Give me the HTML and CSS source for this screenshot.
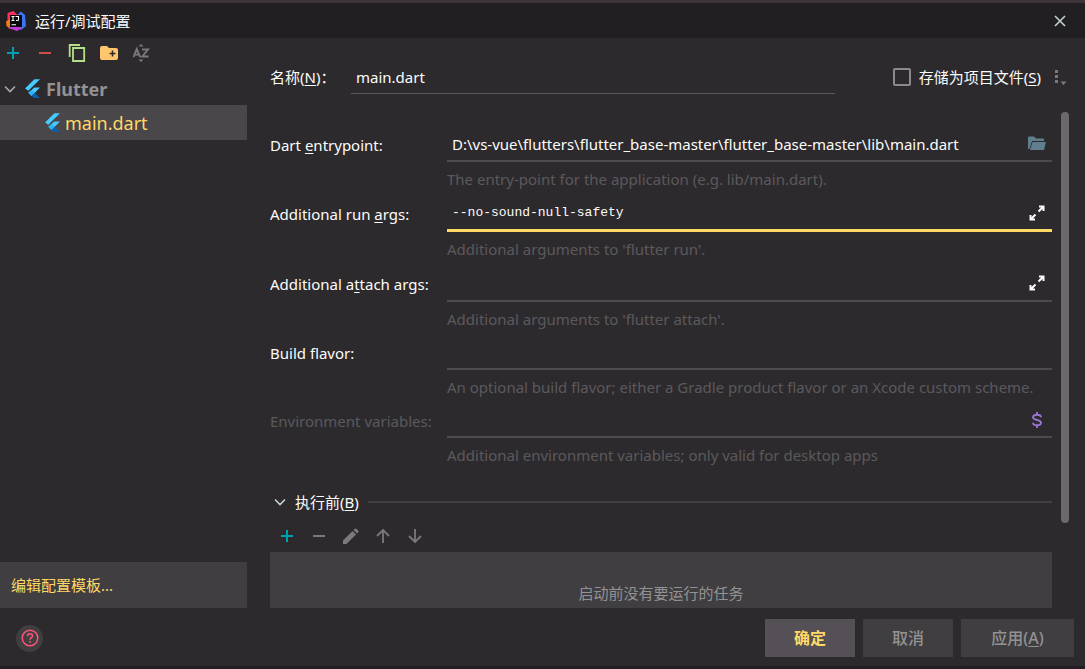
FILE: index.html
```html
<!DOCTYPE html>
<html lang="zh-CN">
<head>
<meta charset="utf-8">
<meta name="viewport" content="width=device-width, initial-scale=1">
<title>运行/调试配置</title>
<link rel="stylesheet" href="styles.css">
</head>
<body>
<svg class="defs" aria-hidden="true">
  <symbol id="flutter" viewBox="0 0 16 20">
    <path d="M10 0h6L3.500 12.500 0 10z" fill="#45cbff"/>
    <path d="M10 9h6l-5.500 5.500L7 18l-3.500-3.500z" fill="#45cbff"/>
    <path d="M7 11.500l3.500 3-3.500 3.500-3.500-3.500z" fill="#2bb4f5"/>
    <path d="M7 18l3.500-3.500L16 20h-6.500z" fill="#0b5fa8"/>
  </symbol>
  <symbol id="plus" viewBox="0 0 12 12"><path d="M6 0v12M0 6h12" stroke="currentColor" stroke-width="2"/></symbol>
  <symbol id="minus" viewBox="0 0 12 12"><path d="M0 6h12" stroke="currentColor" stroke-width="2"/></symbol>
  <symbol id="chevron" viewBox="0 0 12 12"><path d="M1 3.500L6 8.500l5-5" fill="none" stroke="currentColor" stroke-width="1.600"/></symbol>
  <symbol id="expand" viewBox="0 0 16 16"><path d="M10 1.500h4.500V6M14 2L9.500 6.500M1.500 10v4.500H6M2 14L6.500 9.500" fill="none" stroke="currentColor" stroke-width="2"/></symbol>
</svg>
<div class="dialog">
  <header class="titlebar">
    <svg class="logo" viewBox="0 0 20 20" aria-hidden="true">
      <path d="M1.500 2l6-2 5 5-6 8-5-1z" fill="#fe315d"/>
      <path d="M0 10.500L4 8l3 8-3 2-3.500-3z" fill="#f97a12"/>
      <path d="M10 5l5-4.500L19 4l1 11-5 4-5-3z" fill="#3b73f5"/>
      <path d="M2.500 17L5 13l9 1 2 3-5 3z" fill="#c03bd6"/>
      <rect x="4" y="4" width="12" height="12" fill="#08080a"/>
      <path d="M5.500 5.500h3M7 5.500v4M5.500 9.500h3M9.500 5.500h3v3q0 1-1 1h-1.500M5.500 13.700h4.500" fill="none" stroke="#fff" stroke-width="1.100"/>
    </svg>
    <h1 class="title">运行/调试配置</h1>
    <button class="icon-button close" aria-label="关闭"><svg class="i12" viewBox="0 0 12 12"><path d="M1 1l10 10M11 1L1 11" stroke="currentColor" stroke-width="1.600"/></svg></button>
  </header>
  <div class="content">
    <aside class="sidebar">
      <div class="toolbar">
        <button class="icon-button teal" aria-label="添加"><svg class="i12"><use href="#plus"/></svg></button>
        <button class="icon-button red" aria-label="移除"><svg class="i12"><use href="#minus"/></svg></button>
        <button class="icon-button green" aria-label="复制"><svg class="i18" viewBox="0 0 18 18"><path d="M1.700 13V1H12M5 4h11.200v13H5z" fill="none" stroke="currentColor" stroke-width="1.800"/></svg></button>
        <button class="icon-button folder" aria-label="新建文件夹"><svg class="i18" viewBox="0 0 18 18"><path d="M2 2h5l2 2h7q2 0 2 2v8q0 2-2 2H2q-2 0-2-2V4q0-2 2-2z" fill="currentColor"/><path d="M12.500 6.500v6M9.500 9.500h6" stroke="#2d2a2e" stroke-width="1.600"/></svg></button>
        <button class="icon-button gray" aria-label="排序"><svg class="i18" viewBox="0 0 18 18"><path d="M6.500 2.500L9 0l2.500 2.500zM6.500 15.500L9 18l2.500-2.500z" fill="currentColor"/><path d="M1.500 13.200L4.800 5 8.200 13.200M2.800 10.600h4M10 5.500h6L10.300 12.500h6.200" fill="none" stroke="currentColor" stroke-width="1.900"/></svg></button>
      </div>
      <ul class="tree">
        <li><button class="tree-row group"><svg class="i12"><use href="#chevron"/></svg><svg class="flutter"><use href="#flutter"/></svg><span>Flutter</span></button></li>
        <li><button class="tree-row selected"><svg class="flutter"><use href="#flutter"/></svg><span>main.dart</span></button></li>
      </ul>
      <a class="templates" href="#">编辑配置模板...</a>
    </aside>
    <main class="panel">
      <div class="name-row">
        <label class="name-label" for="name">名称(<u>N</u>)：</label>
        <input class="field name-field" id="name" value="main.dart">
        <label class="store"><input class="check" type="checkbox"><span>存储为项目文件(<u>S</u>)</span></label>
        <button class="icon-button gray" aria-label="更多"><svg class="more" viewBox="0 0 12 16"><path d="M0 1h3v3H0zM0 6h3v3H0zM0 11h3v3H0zM5.500 12.500h6L8.500 16z" fill="currentColor"/></svg></button>
      </div>
      <div class="scroll-area">
        <div class="form">
          <label for="entry">Dart <u>e</u>ntrypoint:</label>
          <div class="field-box"><input class="field" id="entry" value="D:\vs-vue\flutters\flutter_base-master\flutter_base-master\lib\main.dart"><button class="icon-button blue" aria-label="浏览"><svg class="i18" viewBox="0 0 18 18"><path d="M0 14V2.500q0-1 1-1h5l2 2h7q1 0 1 1v1.500H4l-2.500 8z" fill="currentColor"/><path d="M4.500 7H18l-2 8H2z" fill="currentColor"/></svg></button></div>
          <p class="hint">The entry-point for the application (e.g. lib/main.dart).</p>

          <label for="run">Additional run <u>a</u>rgs:</label>
          <div class="field-box tall active"><input class="field mono" id="run" value="--no-sound-null-safety"><button class="icon-button" aria-label="展开"><svg class="i16"><use href="#expand"/></svg></button></div>
          <p class="hint">Additional arguments to 'flutter run'.</p>

          <label for="attach">Additional a<u>t</u>tach args:</label>
          <div class="field-box tall"><input class="field" id="attach"><button class="icon-button" aria-label="展开"><svg class="i16"><use href="#expand"/></svg></button></div>
          <p class="hint">Additional arguments to 'flutter attach'.</p>

          <label for="flavor">Build flavor:</label>
          <div class="field-box"><input class="field" id="flavor"></div>
          <p class="hint">An optional build flavor; either a Gradle product flavor or an Xcode custom scheme.</p>

          <label class="muted" for="env">Environment variables:</label>
          <div class="field-box"><input class="field" id="env"><button class="icon-button purple" aria-label="环境变量"><svg class="i16" viewBox="0 0 16 16"><path d="M12 5.200C12 3.500 10.500 2.700 8 2.700S4 3.600 4 5.200C4 8.500 12 7.300 12 10.800c0 1.600-1.500 2.500-4 2.500s-4-.900-4-2.500M8 0v2.700M8 13.300V16" fill="none" stroke="currentColor" stroke-width="1.900"/></svg></button></div>
          <p class="hint">Additional environment variables; only valid for desktop apps</p>
        </div>
        <section class="before">
          <h2 class="before-title"><svg class="i12"><use href="#chevron"/></svg><span>执行前(<u>B</u>)</span></h2>
          <div class="toolbar small">
            <button class="icon-button teal" aria-label="添加"><svg class="i12"><use href="#plus"/></svg></button>
            <button class="icon-button gray" aria-label="移除"><svg class="i12"><use href="#minus"/></svg></button>
            <button class="icon-button gray" aria-label="编辑"><svg class="i16" viewBox="0 0 16 16"><path d="M0 12.500L9.500 3l3.500 3.500L3.500 16H0zM10.500 2l1.300-1.300q.7-.7 1.400 0l2.100 2.100q.7.7 0 1.400L14 5.500z" fill="currentColor"/></svg></button>
            <button class="icon-button gray" aria-label="上移"><svg class="i16" viewBox="0 0 16 16"><path d="M8 15V2M2 8l6-6 6 6" fill="none" stroke="currentColor" stroke-width="1.800"/></svg></button>
            <button class="icon-button gray" aria-label="下移"><svg class="i16" viewBox="0 0 16 16"><path d="M8 1v13M2 8l6 6 6-6" fill="none" stroke="currentColor" stroke-width="1.800"/></svg></button>
          </div>
          <div class="tasks">启动前没有要运行的任务</div>
        </section>
        <div class="scrollbar"></div>
      </div>
    </main>
  </div>
  <footer class="footer">
    <button class="help" aria-label="帮助"><svg class="i18" viewBox="0 0 18 18"><circle cx="9" cy="9" r="7.800" fill="none" stroke="currentColor" stroke-width="1.500"/><path d="M6.500 7.200Q6.500 4.800 9 4.800t2.500 2.200C11.500 8.700 9 8.700 9 10.800M9 12v1.700" fill="none" stroke="currentColor" stroke-width="1.500"/></svg></button>
    <button class="button primary">确定</button>
    <button class="button">取消</button>
    <button class="button wide">应用(<u>A</u>)</button>
  </footer>
</div>
</body>
</html>
```
FILE: styles.css
```css
* { box-sizing: border-box; }
body {
  margin: 0;
  color: #fcfcfa;
  background: #2d2a2e;
  font: 15px/20px "Noto Sans", "Noto Sans CJK SC", sans-serif;
}
button, input { font: inherit; color: inherit; }
u { text-underline-offset: 2px; text-decoration-skip-ink: none; }
.defs { position: absolute; width: 0; height: 0; }
.dialog {
  display: flex;
  flex-direction: column;
  height: 100vh;
  border-top: 3px solid #3d343a;
  border-bottom: 3px solid #211d22;
}
.icon-button {
  display: flex;
  flex: none;
  align-items: center;
  justify-content: center;
  padding: 0;
  border: 0;
  background: none;
}
.i12 { width: 12px; height: 12px; flex: none; }
.i16 { width: 16px; height: 16px; flex: none; }
.i18 { width: 18px; height: 18px; flex: none; }
.more { width: 12px; height: 16px; }
.teal { color: #009fb2; }
.red { color: #d04c4c; }
.green { color: #b5e08a; }
.folder { color: #ffc66d; }
.gray { color: #7b797c; }
.blue { color: #5f7f8e; }
.purple { color: #9a75d8; }

.titlebar {
  display: flex;
  flex: none;
  align-items: center;
  height: 35px;
  padding: 0 19px 0 6px;
  background: #221f22;
}
.logo { width: 20px; height: 20px; }
.title { margin: 0 auto 0 9px; font-size: 15px; font-weight: 400; }
.close { color: #c5d0d4; }

.content { display: flex; flex: 1; min-height: 0; }
.sidebar { display: flex; flex-direction: column; flex: none; width: 247px; }
.toolbar { display: flex; gap: 14px; height: 30px; }
.toolbar .icon-button { width: 18px; }
.sidebar .toolbar { padding-left: 4px; }
.tree { margin: 4px 0 auto; padding: 0; list-style: none; font-size: 18px; }
.tree-row {
  display: flex;
  align-items: center;
  width: 100%;
  height: 33px;
  padding: 0 0 0 4px;
  border: 0;
  background: none;
  color: #939293;
}
.group { font-weight: 700; }
.group .i12 { color: #a9a8aa; }
.group .flutter { margin-left: 9px; }
.flutter { width: 15px; height: 19px; margin-right: 6px; }
.selected {
  height: 35px;
  padding-left: 45px;
  background: #4a474a;
  color: #ffd866;
}
.selected .flutter { margin-right: 5px; }
.templates {
  padding: 13px 11px;
  background: #403e41;
  color: #ffd866;
  text-decoration: none;
}

.panel {
  display: flex;
  flex: 1;
  flex-direction: column;
  min-width: 0;
  padding-left: 23px;
}
.name-row {
  display: flex;
  flex: none;
  align-items: center;
  height: 54px;
  margin-top: 12px;
  padding-right: 18px;
}
.name-label { width: 81px; }
.field {
  flex: 1;
  width: 0;
  height: 100%;
  min-width: 0;
  padding: 0 5px;
  border: 0;
  outline: 0;
  background: none;
}
.name-field { height: 33px; border-bottom: 1px solid #5b595c; }
.store { display: flex; align-items: center; margin: 0 14px 0 58px; }
.check {
  width: 18px;
  height: 18px;
  margin: 0 8px 0 0;
  border: 2px solid #8b898c;
  border-radius: 2px;
  appearance: none;
}
.scroll-area {
  position: relative;
  flex: 1;
  min-height: 0;
  padding: 24px 33px 0 0;
  overflow: hidden;
}
.form { display: grid; grid-template-columns: 177px 1fr; align-items: center; }
.field-box {
  display: flex;
  height: 34px;
  border-bottom: 2px solid #4d4b4e;
}
.field-box.tall { height: 36px; }
.field-box.active { border-bottom: 3px solid #ffd866; }
.field-box .icon-button { width: 30px; }
.mono { font-family: "Liberation Mono", monospace; font-size: 13px; }
.hint {
  grid-column: 2;
  margin: 0;
  color: #5b595c;
  line-height: 34px;
  white-space: nowrap;
}
.muted { color: #5b595c; }
.before { padding-top: 20px; }
.before-title {
  display: flex;
  align-items: center;
  gap: 9px;
  margin: 0;
  padding-left: 4px;
  font-size: 15px;
  font-weight: 400;
}
.before-title .i12 { color: #c5d0d4; }
.before-title::after { flex: 1; height: 2px; background: #403e41; content: ""; }
.toolbar.small { height: 40px; padding: 8px 8px 0; }
.tasks {
  height: 82px;
  padding-top: 31px;
  background: #403e41;
  color: #939293;
  text-align: center;
}
.scrollbar {
  position: absolute;
  top: 8px;
  right: 16px;
  bottom: 85px;
  width: 8px;
  border-radius: 4px;
  background: #6b696c;
}

.footer {
  display: flex;
  flex: none;
  align-items: center;
  gap: 8px;
  height: 58px;
  padding: 2px 11px 0 16px;
}
.help {
  display: grid;
  place-items: center;
  width: 27px;
  height: 27px;
  margin-right: auto;
  padding: 0;
  border: 0;
  border-radius: 50%;
  background: #403e41;
  color: #ff5577;
}
.button {
  width: 90px;
  height: 38px;
  padding: 0;
  border: 0;
  background: #403e41;
  color: #939293;
  font-size: 16px;
  font-weight: 500;
}
.button.wide { width: 113px; }
.button.primary { background: #545056; color: #ffd866; font-weight: 700; }
```
